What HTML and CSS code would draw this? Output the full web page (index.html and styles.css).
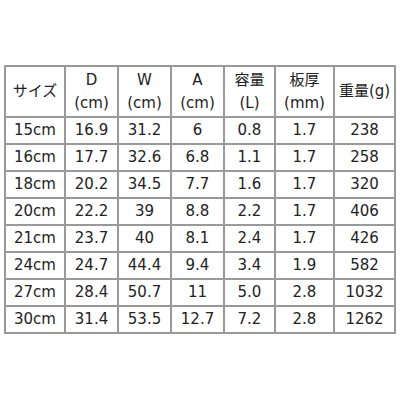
FILE: index.html
```html
<!DOCTYPE html>
<html lang="ja">
<head>
<meta charset="utf-8">
<link rel="stylesheet" href="styles.css">
</head>
<body>
<table class="spec">
<colgroup>
<col class="c1"><col class="c2"><col class="c3"><col class="c4"><col class="c5"><col class="c6"><col class="c7">
</colgroup>
<thead>
<tr class="head"><th>サイズ</th><th>D<br>(cm)</th><th>W<br>(cm)</th><th>A<br>(cm)</th><th>容量<br>(L)</th><th>板厚<br>(mm)</th><th>重量(g)</th></tr>
</thead>
<tbody>
<tr><td>15cm</td><td>16.9</td><td>31.2</td><td>6</td><td>0.8</td><td>1.7</td><td>238</td></tr>
<tr><td>16cm</td><td>17.7</td><td>32.6</td><td>6.8</td><td>1.1</td><td>1.7</td><td>258</td></tr>
<tr><td>18cm</td><td>20.2</td><td>34.5</td><td>7.7</td><td>1.6</td><td>1.7</td><td>320</td></tr>
<tr><td>20cm</td><td>22.2</td><td>39</td><td>8.8</td><td>2.2</td><td>1.7</td><td>406</td></tr>
<tr><td>21cm</td><td>23.7</td><td>40</td><td>8.1</td><td>2.4</td><td>1.7</td><td>426</td></tr>
<tr><td>24cm</td><td>24.7</td><td>44.4</td><td>9.4</td><td>3.4</td><td>1.9</td><td>582</td></tr>
<tr><td>27cm</td><td>28.4</td><td>50.7</td><td>11</td><td>5.0</td><td>2.8</td><td>1032</td></tr>
<tr><td>30cm</td><td>31.4</td><td>53.5</td><td>12.7</td><td>7.2</td><td>2.8</td><td>1262</td></tr>
</tbody>
</table>
</body>
</html>
```
FILE: styles.css
```css
html, body {
  margin: 0;
  padding: 0;
  background: #fff;
}
body {
  padding: 65px 0 0 4px;
  font-family: "DejaVu Sans", "Noto Sans CJK JP", sans-serif;
  font-size: 15px;
  color: #222;
}
.spec {
  border-collapse: collapse;
  table-layout: fixed;
  width: 390px;
}
.spec th, .spec td {
  border: 2px solid #999;
  padding: 0;
  text-align: center;
  vertical-align: middle;
  font-weight: normal;
  line-height: 23px;
}
.spec .head th { height: 49px; }
.spec tbody td { height: 25px; }
.c1 { width: 60px; }
.c2 { width: 53px; }
.c3 { width: 53px; }
.c4 { width: 53px; }
.c5 { width: 51px; }
.c6 { width: 59px; }
.c7 { width: 61px; }
```
